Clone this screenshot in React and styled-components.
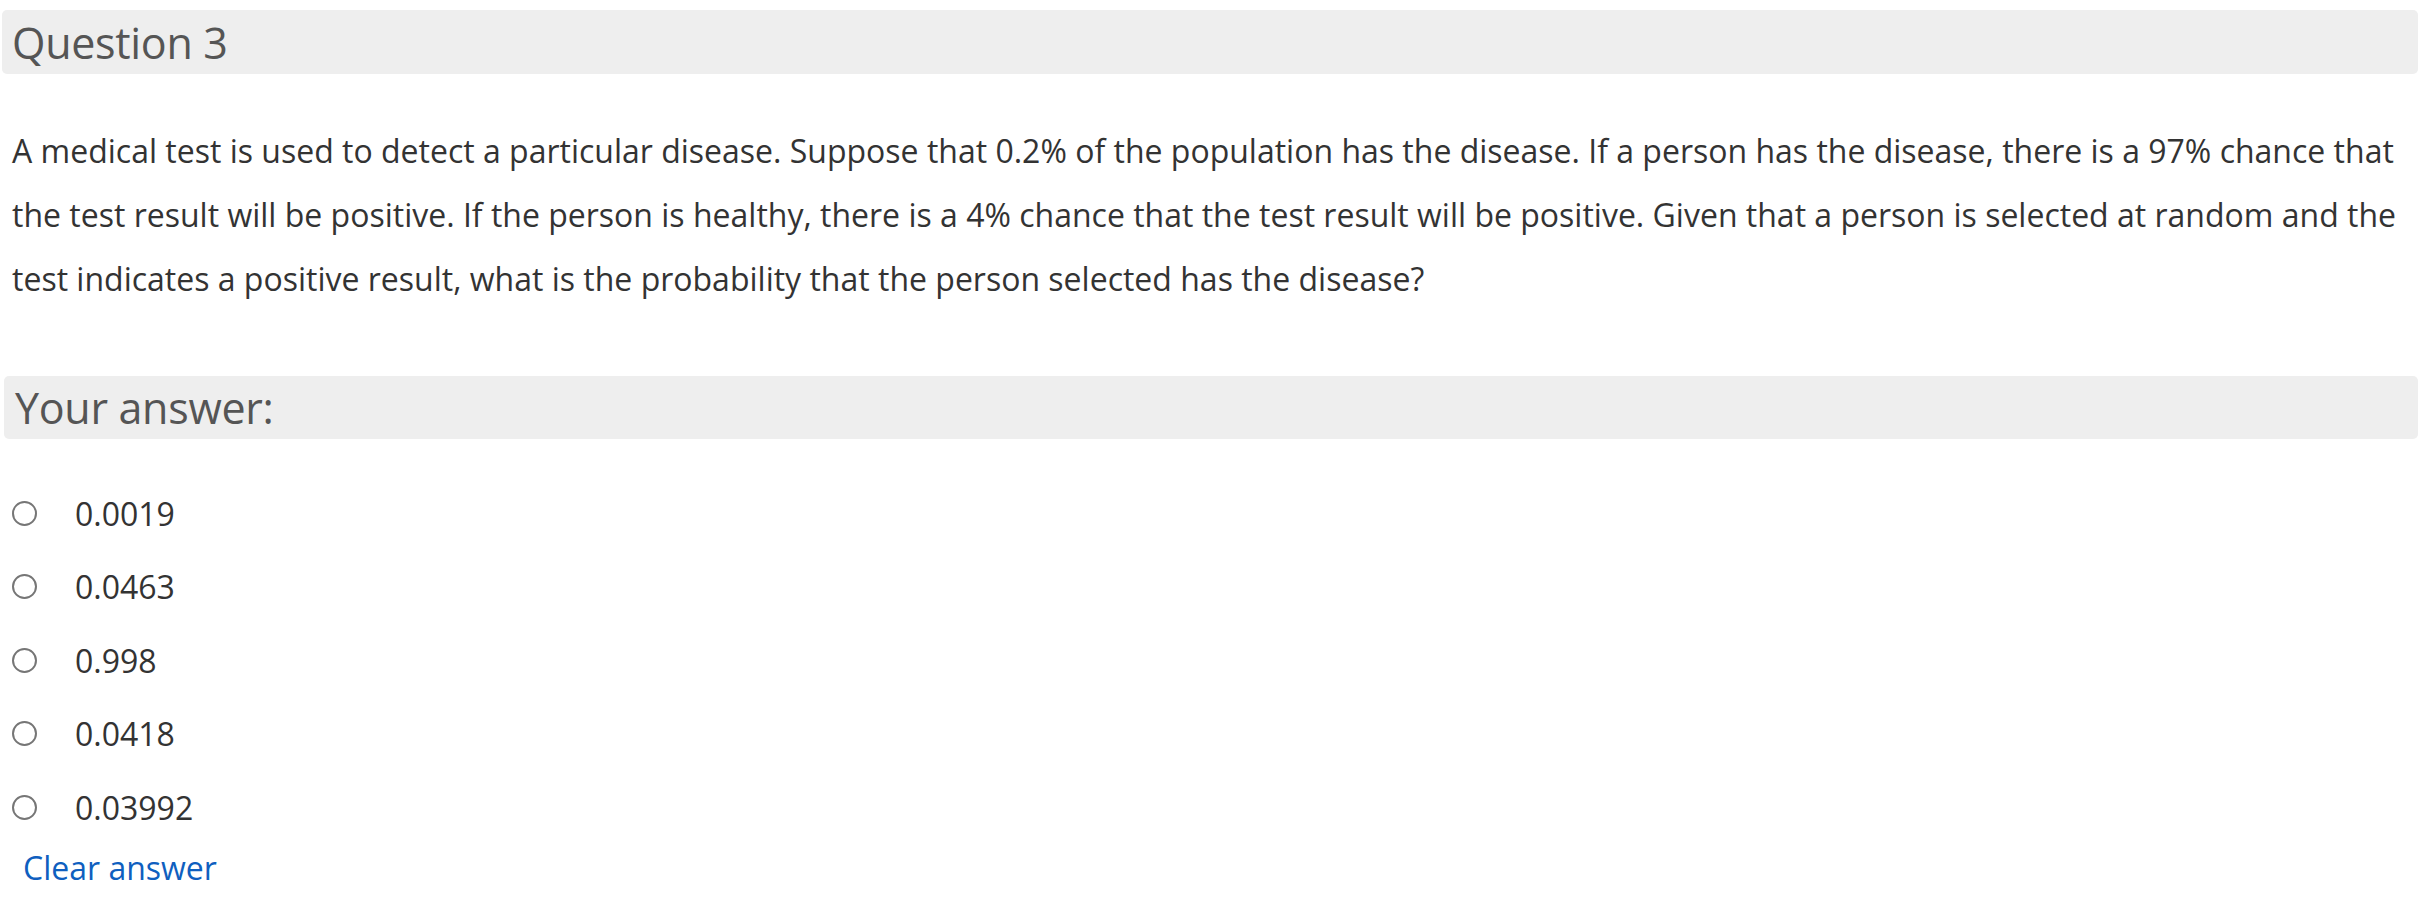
import React from "react";
import styled, { createGlobalStyle } from "styled-components";

const Global = createGlobalStyle`
  html, body { margin: 0; padding: 0; background: #fff; }
  body { font-family: "Open Sans", "Liberation Sans", sans-serif; color: #333; }
`;

const Page = styled.div`
  display: flex;
  flex-direction: column;
  padding-top: 10px;
`;

const Bar = styled.h3`
  margin: 0 0 0 ${(p) => p.$left}px;
  height: ${(p) => p.$h}px;
  display: flex;
  align-items: center;
  padding-left: ${(p) => p.$pad}px;
  background: #eeeeee;
  border-radius: 5px;
  font-weight: 400;
  font-size: 43px;
  color: #555;
  letter-spacing: -0.3px;
`;

const QText = styled.p`
  margin: 45px 0 65px 12px;
  font-size: 32px;
  line-height: 64px;
  color: #333;
  padding-right: 10px;
`;

const Options = styled.div`
  display: flex;
  flex-direction: column;
  margin-top: 49px;
  gap: 23.6px;
`;

const Option = styled.label`
  display: flex;
  align-items: center;
  height: 50px;
  padding-left: 12px;
  font-size: 32px;
  color: #333;
`;

const Radio = styled.span`
  width: 21px;
  height: 21px;
  border: 2px solid #767676;
  border-radius: 50%;
  box-sizing: content-box;
  margin-right: 38px;
  flex: none;
`;

const Clear = styled.a`
  margin: 14px 0 0 23px;
  font-size: 32px;
  color: #0f5fbf;
  text-decoration: none;
  align-self: flex-start;
`;

const options = ["0.0019", "0.0463", "0.998", "0.0418", "0.03992"];

export default function App() {
  return (
    <>
      <Global />
      <Page>
        <Bar $left={2} $h={64} $pad={10}>Question 3</Bar>
        <QText>
          A medical test is used to detect a particular disease. Suppose that 0.2% of the population has the disease. If a person has the disease, there is a 97% chance that the test result will be positive. If the person is healthy, there is a 4% chance that the test result will be positive. Given that a person is selected at random and the test indicates a positive result, what is the probability that the person selected has the disease?
        </QText>
        <Bar $left={4} $h={63} $pad={11}>Your answer:</Bar>
        <Options>
          {options.map((o) => (
            <Option key={o}>
              <Radio />
              {o}
            </Option>
          ))}
        </Options>
        <Clear href="#">Clear answer</Clear>
      </Page>
    </>
  );
}
